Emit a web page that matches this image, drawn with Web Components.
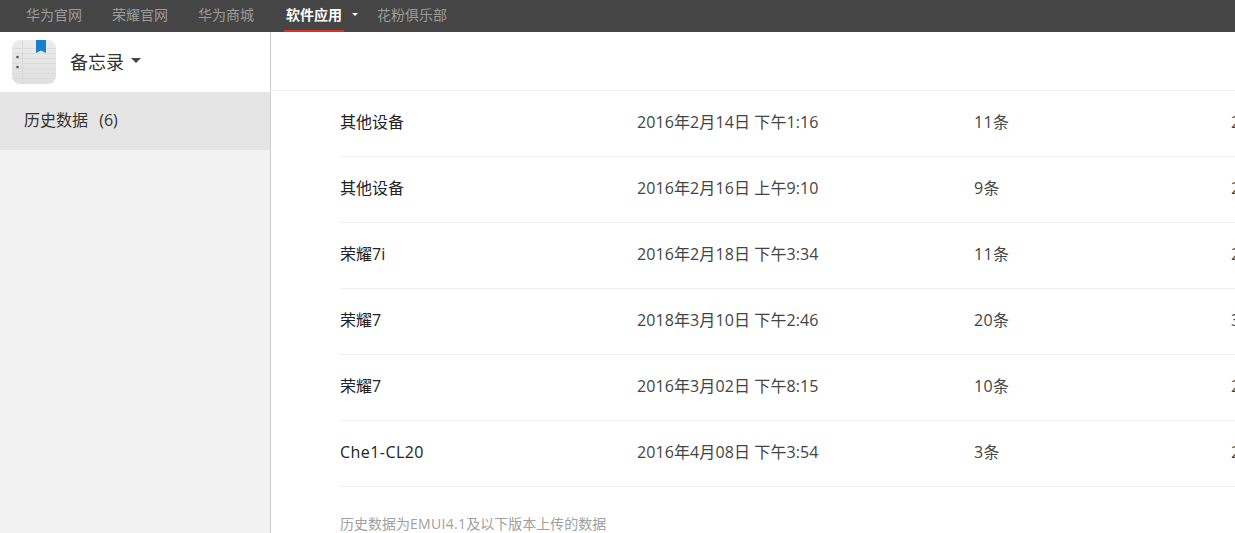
<!DOCTYPE html>
<html lang="zh">
<head>
<meta charset="utf-8">
<title>备忘录</title>
<style>
  html, body { margin: 0; height: 100%; overflow: hidden; }
  body { font-family: "Open Sans", "Noto Sans CJK SC", sans-serif; color: #333; background: #fff; }
  .latin { letter-spacing: .3px; }
</style>
</head>
<body>
<app-shell>
  <top-bar slot="top">
    <top-link>华为官网</top-link>
    <top-link>荣耀官网</top-link>
    <top-link>华为商城</top-link>
    <top-link active caret>软件应用</top-link>
    <top-link>花粉俱乐部</top-link>
  </top-bar>
  <side-bar slot="side">
    <side-item>历史数据 (6)</side-item>
  </side-bar>
  <record-list>
    <record-row name="其他设备" date="2016年2月14日 下午1:16" count="11条" tail="2"></record-row>
    <record-row name="其他设备" date="2016年2月16日 上午9:10" count="9条" tail="2"></record-row>
    <record-row name="荣耀7i" date="2016年2月18日 下午3:34" count="11条" tail="2"></record-row>
    <record-row name="荣耀7" date="2018年3月10日 下午2:46" count="20条" tail="3"></record-row>
    <record-row name="荣耀7" date="2016年3月02日 下午8:15" count="10条" tail="2"></record-row>
    <record-row wide name="Che1-CL20" date="2016年4月08日 下午3:54" count="3条" tail="2"></record-row>
    <span slot="note">历史数据为<span class="latin">EMUI4.1</span>及以下版本上传的数据</span>
  </record-list>
</app-shell>
<script>
class AppShell extends HTMLElement {
  constructor() {
    super();
    this.attachShadow({ mode: 'open' });
    this.shadowRoot.innerHTML = `
      <style>
        :host { display: grid; grid-template-rows: 32px 1fr; height: 533px; overflow: hidden; }
        .body { display: grid; grid-template-columns: 271px 1fr; min-height: 0; }
      </style>
      <slot name="top"></slot>
      <div class="body">
        <slot name="side"></slot>
        <slot></slot>
      </div>
    `;
  }
}
customElements.define('app-shell', AppShell);

class TopBar extends HTMLElement {
  constructor() {
    super();
    this.attachShadow({ mode: 'open' });
    this.shadowRoot.innerHTML = `
      <style>
        :host { display: flex; height: 32px; padding-left: 26px; background: #454545; box-sizing: border-box; }
      </style>
      <slot></slot>
    `;
  }
}
customElements.define('top-bar', TopBar);

class TopLink extends HTMLElement {
  constructor() {
    super();
    this.attachShadow({ mode: 'open' });
    this.shadowRoot.innerHTML = `
      <style>
        :host { display: block; font-size: 14px; line-height: 29px; color: #9b9b9b; margin-right: 30px; white-space: nowrap; }
        :host([active]) { color: #fff; font-weight: 700; margin-left: 2px; margin-right: 19px; }
        .label { display: inline-block; height: 32px; box-sizing: border-box; }
        :host([active]) .label { border-bottom: 2px solid #d9301f; padding: 0 2px; margin-left: -2px; }
        .caret { display: none; width: 0; height: 0; border: 3px solid transparent; border-top: 3px solid #fff; border-bottom: 0; margin: 0 0 3px 8px; vertical-align: middle; }
        :host([caret]) .caret { display: inline-block; }
      </style>
      <span class="label"><slot></slot></span><span class="caret"></span>
    `;
  }
}
customElements.define('top-link', TopLink);

class SideBar extends HTMLElement {
  constructor() {
    super();
    this.attachShadow({ mode: 'open' });
    this.shadowRoot.innerHTML = `
      <style>
        :host { display: block; background: #f2f2f2; border-right: 1px solid #ccc; box-sizing: border-box; }
        header { display: flex; align-items: center; height: 60px; padding-left: 12px; background: #fff; }
        svg { display: block; width: 44px; height: 44px; margin-right: 14px; }
        .title { font-size: 18px; line-height: 24px; color: #333; }
        .caret { width: 0; height: 0; border: 5px solid transparent; border-top: 5px solid #444; border-bottom: 0; margin: 0 0 4px 7px; }
      </style>
      <header>
        <svg viewBox="0 0 44 44">
          <defs>
            <clipPath id="r"><rect width="44" height="44" rx="8"/></clipPath>
            <linearGradient id="g" x1="0" y1="0" x2="0" y2="1">
              <stop offset="0" stop-color="#ececec"/>
              <stop offset="1" stop-color="#e0e0e0"/>
            </linearGradient>
          </defs>
          <g clip-path="url(#r)">
            <rect width="44" height="44" fill="url(#g)"/>
            <path d="M0 8.500H44M0 13.500H44M0 18.500H44M0 23.500H44M0 28.500H44M0 33.500H44M0 38.500H44" stroke="#dcdcdc" fill="none"/>
            <path d="M10.500 0V44" stroke="#d8d8d8" fill="none"/>
            <circle cx="5.500" cy="17" r="1.300" fill="#555"/>
            <circle cx="5.500" cy="27" r="1.300" fill="#555"/>
            <path d="M24 0H34V13L29 10.500L24 13Z" fill="#1a7fcb"/>
          </g>
        </svg>
        <span class="title">备忘录</span><span class="caret"></span>
      </header>
      <slot></slot>
    `;
  }
}
customElements.define('side-bar', SideBar);

class SideItem extends HTMLElement {
  constructor() {
    super();
    this.attachShadow({ mode: 'open' });
    this.shadowRoot.innerHTML = `
      <style>
        :host { display: block; height: 58px; line-height: 57px; padding-left: 24px; background: #e5e5e5; font-size: 16px; color: #333; word-spacing: 7px; }
      </style>
      <slot></slot>
    `;
  }
}
customElements.define('side-item', SideItem);

class RecordList extends HTMLElement {
  constructor() {
    super();
    this.attachShadow({ mode: 'open' });
    this.shadowRoot.innerHTML = `
      <style>
        :host { display: block; min-width: 0; overflow: hidden; }
        .head { height: 58px; border-bottom: 1px solid #eee; }
        .rows { padding-left: 69px; }
        .note { padding-top: 27px; font-size: 14px; line-height: 20px; color: #a0a0a0; white-space: nowrap; }
      </style>
      <div class="head"></div>
      <div class="rows">
        <slot></slot>
        <div class="note"><slot name="note"></slot></div>
      </div>
    `;
  }
}
customElements.define('record-list', RecordList);

class RecordRow extends HTMLElement {
  constructor() {
    super();
    this.attachShadow({ mode: 'open' });
    this.shadowRoot.innerHTML = `
      <style>
        :host { display: grid; grid-template-columns: 297px 337px 257px 100px; height: 66px; line-height: 62px; box-sizing: border-box; border-bottom: 1px solid #eee; font-size: 16px; color: #444; white-space: nowrap; }
        .name { color: #222; }
        :host([wide]) .name { letter-spacing: .45px; }
        .date { letter-spacing: .1px; }
        .count { letter-spacing: .3px; }
      </style>
      <span class="name"></span><span class="date"></span><span class="count"></span><span class="tail"></span>
    `;
    for (const k of ['name', 'date', 'count', 'tail']) {
      this.shadowRoot.querySelector('.' + k).textContent = this.getAttribute(k);
    }
  }
}
customElements.define('record-row', RecordRow);
</script>
</body>
</html>
